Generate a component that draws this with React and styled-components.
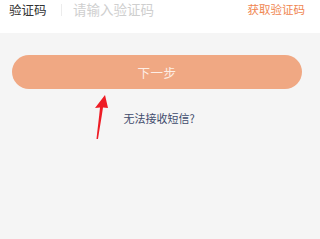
import React from "react";
import styled, { createGlobalStyle } from "styled-components";

const GlobalStyle = createGlobalStyle`
  html, body {
    margin: 0;
    padding: 0;
    background: #f5f5f5;
    font-family: "Noto Sans CJK SC", "Noto Sans", sans-serif;
  }
`;

const Page = styled.div`
  position: relative;
  width: 320px;
  height: 239px;
  overflow: hidden;
  background: #f5f5f5;
`;

const InputBar = styled.div`
  display: flex;
  align-items: flex-start;
  height: 33px;
  box-sizing: border-box;
  padding: 2px 15px 0 9px;
  background: #ffffff;
`;

const Label = styled.span`
  font-size: 12.5px;
  line-height: 15px;
  color: #333333;
  width: 38px;
`;

const Divider = styled.span`
  width: 1px;
  height: 12px;
  margin: 2px 11px 0 14px;
  background: #ececec;
`;

const Placeholder = styled.span`
  flex: 1;
  font-size: 13.5px;
  line-height: 15px;
  color: #cfcfcf;
`;

const CodeLink = styled.span`
  font-size: 11.5px;
  line-height: 15px;
  color: #f08650;
`;

const Content = styled.div`
  display: flex;
  flex-direction: column;
  align-items: center;
  padding: 22px 18px 0 12px;
`;

const NextButton = styled.button`
  width: 290px;
  height: 34px;
  border: none;
  border-radius: 17px;
  background: #f0a883;
  color: #fdeee6;
  font-family: inherit;
  font-size: 12.5px;
  letter-spacing: 0.5px;
  padding: 0;
`;

const HelpLink = styled.div`
  margin-top: 22px;
  padding-left: 4px;
  font-size: 11px;
  line-height: 15px;
  color: #3e4b6c;
`;

const Arrow = styled.svg`
  position: absolute;
  left: 90px;
  top: 92px;
`;

export default function App() {
  return (
    <Page>
      <GlobalStyle />
      <InputBar>
        <Label>验证码</Label>
        <Divider />
        <Placeholder>请输入验证码</Placeholder>
        <CodeLink>获取验证码</CodeLink>
      </InputBar>
      <Content>
        <NextButton>下一步</NextButton>
        <HelpLink>无法接收短信?</HelpLink>
      </Content>
      <Arrow width="24" height="50" viewBox="0 0 24 50">
        <path
          d="M15 3 L5 16 L10 15.5 C9 26 7.5 37 6.5 47 L8 47 C9.5 37 11.5 26 13 15.5 L18 16 Z"
          fill="#ee1c25"
        />
      </Arrow>
    </Page>
  );
}
